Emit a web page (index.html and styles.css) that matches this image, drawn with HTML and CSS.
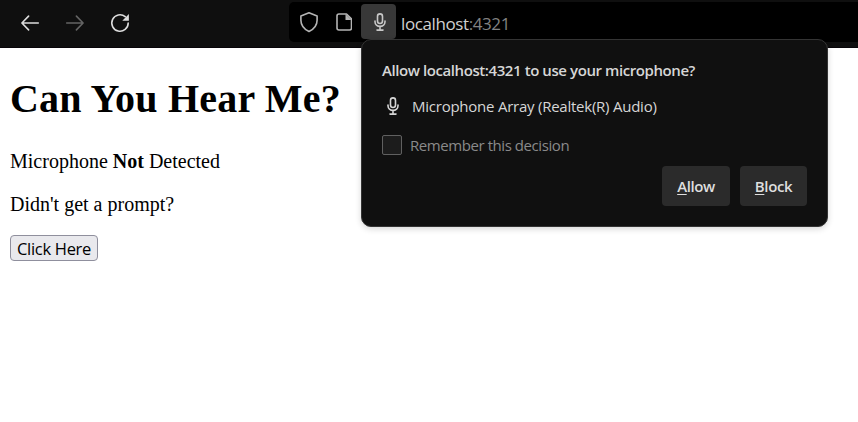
FILE: index.html
```html
<!DOCTYPE html>
<html lang="en">
<head>
<meta charset="utf-8">
<title>Can You Hear Me?</title>
<link rel="stylesheet" href="styles.css">
</head>
<body>
<svg class="defs" width="0" height="0">
  <symbol id="mic" viewBox="0 0 12 18">
    <g fill="none" stroke="currentColor" stroke-width="1.6" stroke-linecap="round">
      <rect x="3.5" y=".9" width="5" height="9.6" rx="2.5"/>
      <path d="M1 8v.8a5 4.6 0 0 0 10 0V8M6 13.5V17M3 17.1h6"/>
    </g>
  </symbol>
</svg>
<header class="toolbar">
  <nav class="nav">
    <svg class="icon" viewBox="0 0 20 20"><path d="M18.3 10H2M8.6 3.1 1.9 10l6.7 6.9"/></svg>
    <svg class="icon disabled" viewBox="0 0 20 20"><path d="M1.7 10H18M11.4 3.1l6.7 6.9-6.7 6.9"/></svg>
    <svg class="icon" viewBox="0 0 20 20"><path d="M18.2 10a8.2 8.2 0 1 1-3-6.3"/><path class="solid" d="M18.9 1v6.8h-6.600z"/></svg>
  </nav>
  <div class="urlbar">
    <svg class="shield" viewBox="0 0 20 22"><path d="M10 1.700 18.100 5v4.200c0 4.400-3 8.800-8.100 11.300-5.100-2.500-8.100-6.900-8.100-11.300V5z"/></svg>
    <svg class="doc" viewBox="0 0 16 18"><path d="M3 1h7.500l5 5v9a2 2 0 0 1-2 2H3a2 2 0 0 1-2-2V3a2 2 0 0 1 2-2z"/><path class="solid" d="M9.500 1v6h6z"/></svg>
    <span class="mic-button"><svg class="mic"><use href="#mic"/></svg></span>
    <span class="url">localhost<span class="port">:4321</span></span>
  </div>
</header>
<main class="page">
  <h1>Can You Hear Me?</h1>
  <p>Microphone <b>Not</b> Detected</p>
  <p>Didn't get a prompt?</p>
  <button class="click">Click Here</button>
</main>
<section class="prompt">
  <h2 class="title">Allow localhost:4321 to use your microphone?</h2>
  <div class="device"><svg class="mic"><use href="#mic"/></svg><span class="device-name">Microphone Array (Realtek(R) Audio)</span></div>
  <div class="remember"><span class="box"></span><span class="remember-text">Remember this decision</span></div>
  <div class="actions">
    <button class="action"><span class="key">A</span>llow</button>
    <button class="action block"><span class="key">B</span>lock</button>
  </div>
</section>
</body>
</html>
```
FILE: styles.css
```css
* { box-sizing: border-box; }
body { margin: 0; height: 422px; background: #fff; overflow: hidden; position: relative; }
.defs { position: absolute; }
svg { display: block; flex: none; }
.toolbar { display: flex; height: 48px; background: #0f0f0f; border-bottom: 1px solid #080509; font-family: "Open Sans", sans-serif; }
.nav { display: flex; align-items: center; gap: 25px; width: 289px; padding-left: 20px; height: 46px; }
.icon { width: 20px; height: 20px; fill: none; stroke: #dcdcdc; stroke-width: 1.6; stroke-linecap: round; stroke-linejoin: round; }
.disabled { stroke: #646464; }
.icon .solid { fill: #dcdcdc; stroke: none; }
.urlbar { flex: 1; display: flex; align-items: center; height: 40px; margin-top: 2px; padding-left: 10px; background: #000; border-radius: 5px 0 0 5px; color: #b4b4b4; }
.shield, .doc { fill: none; stroke: currentColor; stroke-width: 1.6; stroke-linejoin: round; }
.shield { width: 20px; height: 22px; }
.doc { width: 16px; height: 18px; margin-left: 17px; }
.doc .solid { fill: currentColor; stroke: none; }
.mic-button { display: flex; justify-content: center; align-items: center; width: 35px; height: 35px; margin: 0 0 1px 9px; padding-left: 2px; background: #383838; border-radius: 4px; color: #c8c8c8; }
.mic { width: 12px; height: 18px; }
.url { margin-left: 5px; font-size: 17px; letter-spacing: -.4px; line-height: 24px; color: #d0d0d0; padding-top: 4px; }
.port { color: #828282; }
.page { padding: 28px 10px 0; font-family: "Liberation Serif", serif; color: #000; }
h1 { margin: 0 0 28px; font-size: 40px; line-height: 46px; letter-spacing: .2px; }
p { margin: 0 0 20px; font-size: 20px; line-height: 23px; }
.click { display: block; width: 88px; height: 26px; margin-top: -1px; padding: 1px 0 0; border: 1px solid #8f8f9d; border-radius: 4px; background: #e9e9ed; color: #000; font: 16.5px/23px "Open Sans", sans-serif; letter-spacing: -.3px; white-space: nowrap; }
.prompt { position: absolute; left: 361px; top: 39px; width: 467px; height: 188px; padding: 19px 20px 20px; border: 1px solid #343434; border-radius: 10px; background: #101010; color: #d6d6d6; box-shadow: 0 2px 6px rgba(0,0,0,.16); font: 15px/22px "Open Sans", sans-serif; white-space: nowrap; }
.title { margin: 0; font-size: 15px; line-height: 22px; font-weight: 600; letter-spacing: -.42px; }
.device { display: flex; align-items: center; height: 22px; margin-top: 14px; padding-left: 5px; }
.device-name { margin-left: 13px; letter-spacing: -.24px; }
.remember { display: flex; align-items: center; height: 22px; margin-top: 17px; color: #8a8a8a; }
.box { width: 20px; height: 20px; border: 1px solid #606060; border-radius: 2px; background: #1c1c1c; }
.remember-text { margin-left: 8px; letter-spacing: -.43px; }
.actions { display: flex; justify-content: flex-end; gap: 10px; margin-top: 10px; }
.action { width: 68px; height: 40px; padding: 0; border: 0; border-radius: 4px; background: #2b2b2b; color: #dedede; font: 600 15px/40px "Open Sans", sans-serif; letter-spacing: -.4px; }
.block { width: 67px; }
.key { text-decoration: underline; text-underline-offset: 2px; text-decoration-thickness: 1px; }
```
